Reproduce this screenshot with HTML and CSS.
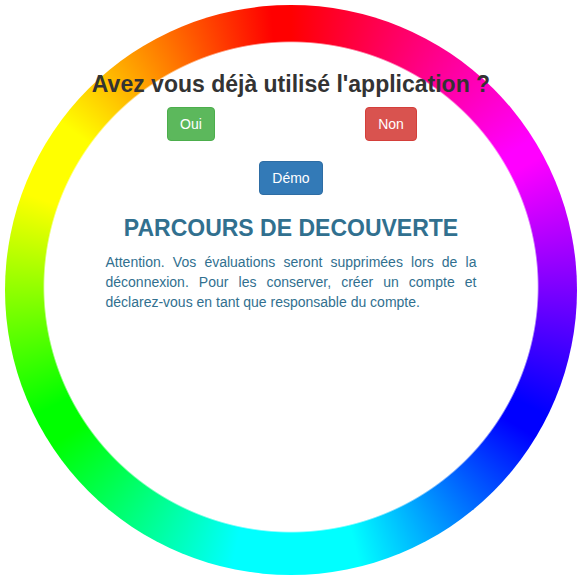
FILE: index.html
```html
<!DOCTYPE html>
<html lang="fr">
<head>
<meta charset="utf-8">
<title>Parcours de découverte</title>
<link rel="stylesheet" href="styles.css">
</head>
<body>
<div class="wheel">
  <h3 class="question">Avez vous déjà utilisé l'application ?</h3>
  <div class="choices">
    <button class="btn btn-success">Oui</button>
    <button class="btn btn-danger">Non</button>
  </div>
  <button class="btn btn-primary demo">Démo</button>
  <h3 class="heading">PARCOURS DE DECOUVERTE</h3>
  <p class="notice">Attention. Vos évaluations seront supprimées lors de la déconnexion. Pour les conserver, créer un compte et déclarez-vous en tant que responsable du compte.</p>
</div>
</body>
</html>
```
FILE: styles.css
```css
html, body {
  margin: 0;
  padding: 0;
  background: #fff;
}
body {
  font-family: "Liberation Sans", Arial, Helvetica, sans-serif;
  font-size: 14px;
  line-height: 20px;
  color: #333;
}
.wheel {
  box-sizing: border-box;
  width: 572px;
  height: 570px;
  margin: 5px;
  border-radius: 50%;
  background:
    radial-gradient(248px 246px at 286px 282px, #fff 99.3%, rgba(255,255,255,0) 100%),
    conic-gradient(from 0deg at 50% 50%,
      #f00 0deg, #f0f 58deg, #f0f 62deg, #00f 116deg, #00f 121deg,
      #0ff 166deg, #0ff 192deg, #0f0 237deg, #0f0 244deg,
      #ff0 290deg, #ff0 306deg, #f00 356deg, #f00 360deg);
  padding-top: 67px;
  display: flex;
  flex-direction: column;
  align-items: center;
}
.question {
  margin: 0;
  font-size: 23px;
  line-height: 25px;
  font-weight: bold;
  color: #333;
  white-space: nowrap;
  text-align: center;
}
.choices {
  margin-top: 10px;
  width: 400px;
  display: grid;
  grid-template-columns: 1fr 1fr;
  justify-items: center;
}
.btn {
  font-family: inherit;
  font-size: 14px;
  line-height: 20px;
  padding: 6px 12px;
  border: 1px solid transparent;
  border-radius: 4px;
  color: #fff;
  font-weight: normal;
  cursor: pointer;
}
.btn-success {
  background: #5cb85c;
  border-color: #4cae4c;
}
.btn-danger {
  background: #d9534f;
  border-color: #d43f3a;
}
.btn-primary {
  background: #337ab7;
  border-color: #2e6da4;
}
.demo {
  margin-top: 20px;
}
.heading {
  margin: 21px 0 0;
  font-size: 23px;
  line-height: 25px;
  font-weight: bold;
  color: #31708f;
  white-space: nowrap;
}
.notice {
  margin: 11px 0 0;
  width: 371px;
  color: #31708f;
  text-align: justify;
  font-size: 14px;
  line-height: 20px;
}
```
